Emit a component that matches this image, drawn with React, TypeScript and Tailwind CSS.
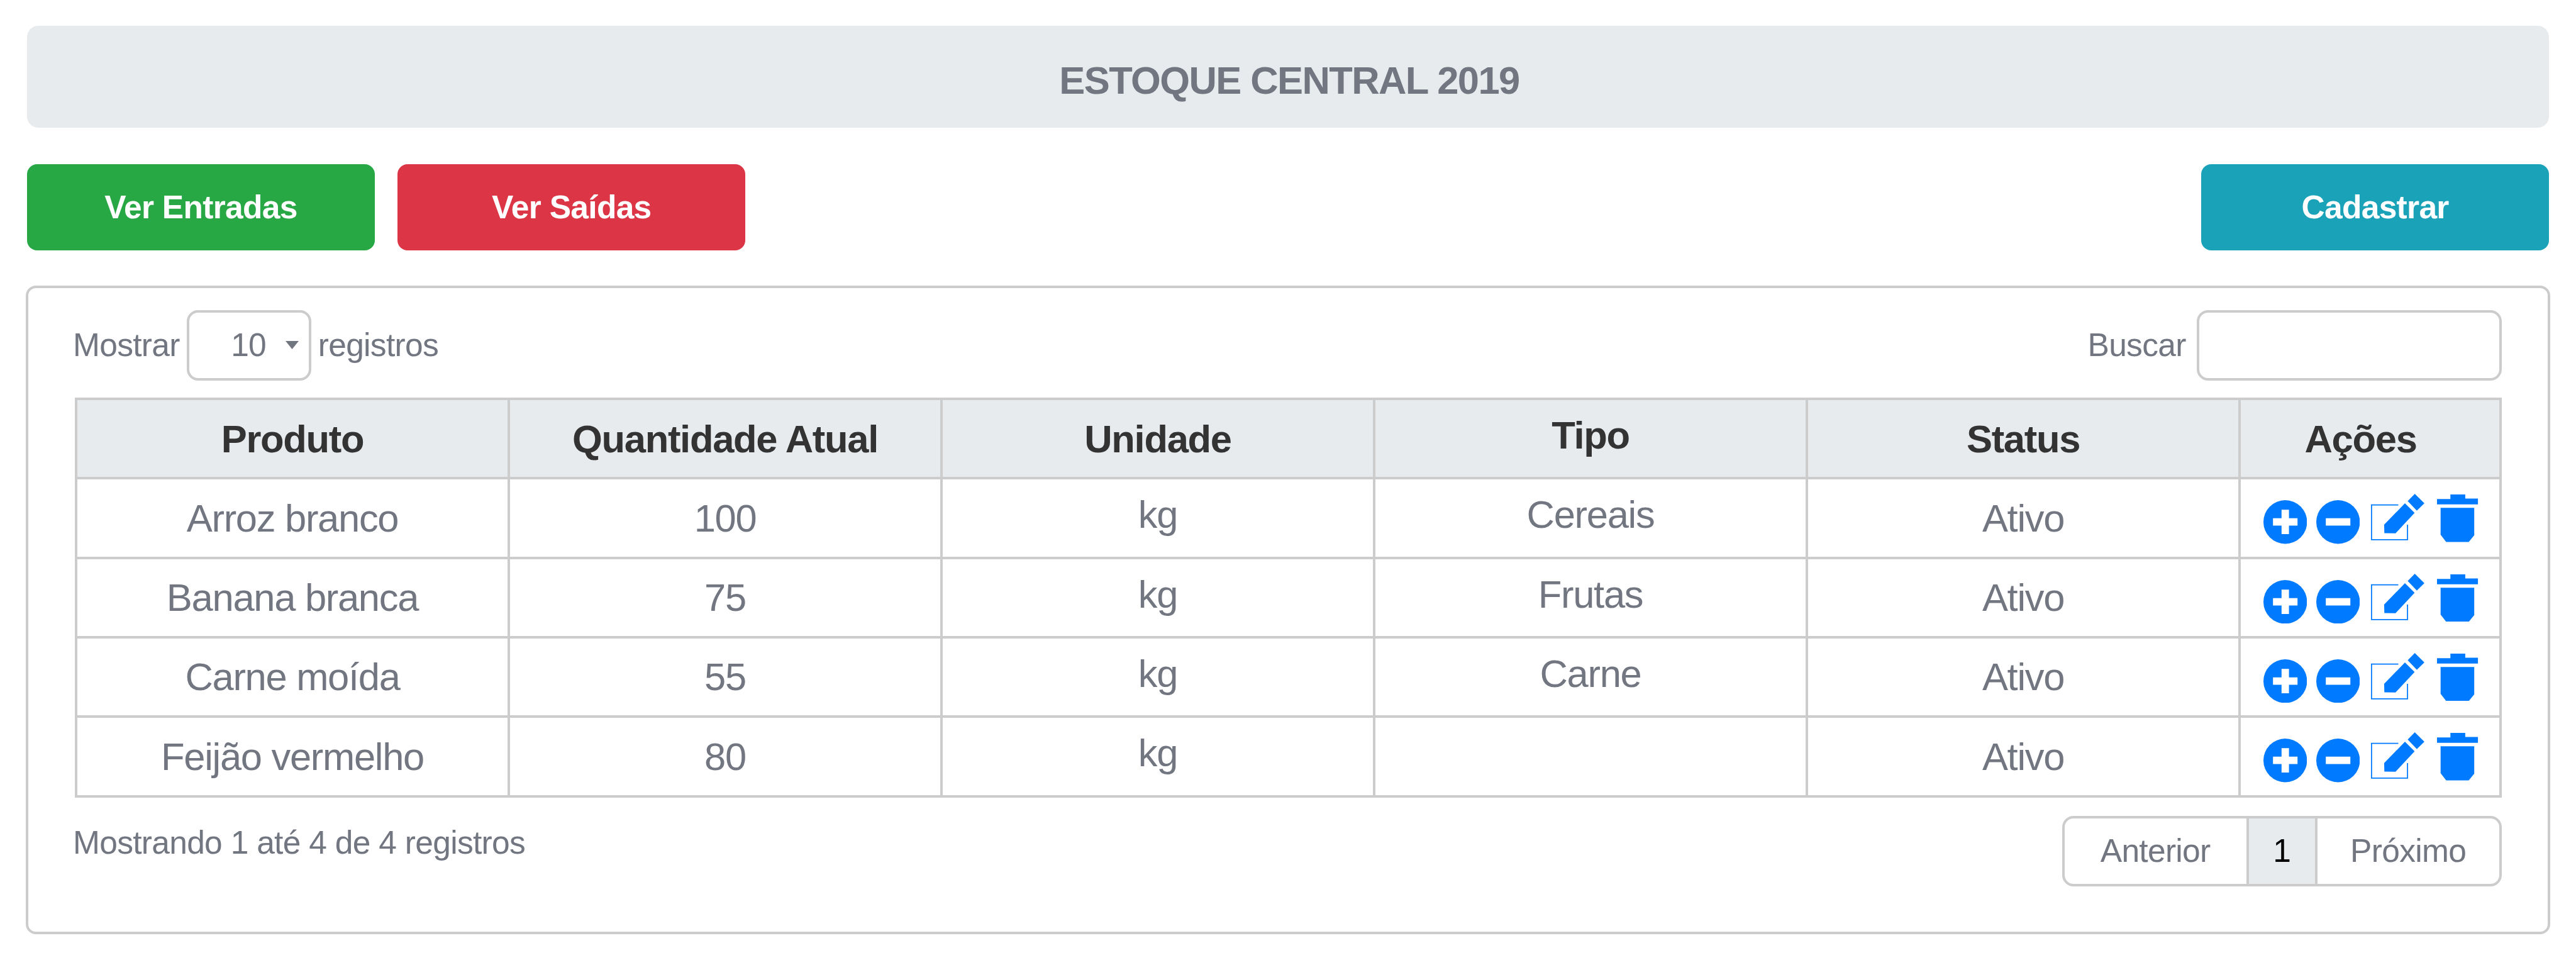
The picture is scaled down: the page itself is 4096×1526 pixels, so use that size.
import { useState } from "react";

type Product = {
  name: string;
  quantity: number;
  unit: string;
  type: string;
  status: string;
};

const products: Product[] = [
  { name: "Arroz branco", quantity: 100, unit: "kg", type: "Cereais", status: "Ativo" },
  { name: "Banana branca", quantity: 75, unit: "kg", type: "Frutas", status: "Ativo" },
  { name: "Carne moída", quantity: 55, unit: "kg", type: "Carne", status: "Ativo" },
  { name: "Feijão vermelho", quantity: 80, unit: "kg", type: "", status: "Ativo" },
];

function PlusIcon() {
  return (
    <svg viewBox="0 0 69.4 69.4" className="mt-[8.8px] w-[69.4px] h-[69.4px] shrink-0" fill="currentColor">
      <circle cx="34.7" cy="34.7" r="34.7" />
      <path fill="#fff" d="M28.8 15.3h11.8v13.5h13.6v11.8H40.6v13.5H28.8V40.6H15.2V28.8h13.6z" />
    </svg>
  );
}

function MinusIcon() {
  return (
    <svg viewBox="0 0 69.4 69.4" className="mt-[8.8px] ml-[14.6px] w-[69.4px] h-[69.4px] shrink-0" fill="currentColor">
      <circle cx="34.7" cy="34.7" r="34.7" />
      <path fill="#fff" d="M15.2 28.8h39v11.8h-39z" />
    </svg>
  );
}

function EditIcon() {
  return (
    <svg viewBox="0 0 85 73.8" className="-mt-[1px] ml-[18px] w-[85px] h-[73.8px] shrink-0" fill="currentColor">
      <path fill="none" stroke="currentColor" strokeWidth="1.75" d="M43.5 17.75H.9V72.9h57.2V49.1" />
      <path d="M54 15l15.4 15.3-30.3 32.4-17.8-.3-.4-13.3z" />
      <path d="M69.7 0l15.2 15-12 11.7-14.5-15.3z" />
    </svg>
  );
}

function TrashIcon() {
  return (
    <svg viewBox="0 0 65.1 75.4" className="ml-[20.1px] w-[65.1px] h-[75.4px] shrink-0" fill="currentColor">
      <path d="M0 7.3h21.3V0h23.6v6.5h20.2v9.2H0z" />
      <path d="M5.7 21.2h53.5v43.6l-8.7 10.6H14.6L5.7 63.9z" />
    </svg>
  );
}

function ProductRow({ product }: { product: Product }) {
  return (
    <tr className="h-[126.3px]">
      <td className="border-4 border-[#ccc]">{product.name}</td>
      <td className="border-4 border-[#ccc]">{product.quantity}</td>
      <td className="border-4 border-[#ccc] pb-[11px]">{product.unit}</td>
      <td className="border-4 border-[#ccc] pb-[11px]">{product.type}</td>
      <td className="border-4 border-[#ccc]">{product.status}</td>
      <td className="border-4 border-[#ccc] align-top">
        <div className="flex items-start pt-6 pl-9 text-[#007bff]">
          <PlusIcon />
          <MinusIcon />
          <EditIcon />
          <TrashIcon />
        </div>
      </td>
    </tr>
  );
}

export default function App() {
  const [pageSize, setPageSize] = useState("10");
  const [search, setSearch] = useState("");

  const rows = products.filter((p) => p.name.toLowerCase().includes(search.toLowerCase()));

  return (
    <div className="w-[4096px] h-[1526px] overflow-hidden bg-white pt-[41px] px-[42.7px] font-['Liberation_Sans',Arial,sans-serif] text-[51.5px] tracking-[-0.7px] leading-none text-[#717681]">
      <h1 className="flex items-center justify-center h-[162px] pt-[12px] pl-[4px] rounded-[18px] bg-[#e7ebee] text-[61.5px] tracking-[-1.6px] font-bold">
        ESTOQUE CENTRAL 2019
      </h1>

      <div className="flex mt-[58px] font-bold text-white">
        <button className="w-[553.4px] h-[137px] rounded-2xl bg-[#28a745]">Ver Entradas</button>
        <button className="w-[553.4px] h-[137px] ml-9 rounded-2xl bg-[#dc3545]">Ver Saídas</button>
        <button className="w-[553.4px] h-[137px] ml-auto rounded-2xl bg-[#1aa2b8]">Cadastrar</button>
      </div>

      <div className="-mx-[1.7px] mt-14 h-[1031px] border-4 border-[#ccc] rounded-2xl pl-[71px] pr-[73.4px] pt-[34.7px]">
        <div className="flex items-center h-[112px]">
          <label className="flex items-center">
            Mostrar
            <span className="relative ml-[11.5px] mr-[10.6px]">
              <select
                value={pageSize}
                onChange={(e) => setPageSize(e.target.value)}
                className="block appearance-none w-[198px] h-[112px] pl-[66px] border-4 border-[#ccc] rounded-[18px]"
              >
                <option>10</option>
                <option>25</option>
                <option>50</option>
              </select>
              <svg viewBox="0 0 21 13" className="absolute right-5 top-[49.5px] w-[21px] h-[13px] pointer-events-none" fill="currentColor">
                <path d="M0 0h21L10.5 13z" />
              </svg>
            </span>
            registros
          </label>
          <label className="flex items-center ml-auto">
            Buscar
            <input
              value={search}
              onChange={(e) => setSearch(e.target.value)}
              className="ml-[17px] w-[485px] h-[112px] px-6 border-4 border-[#ccc] rounded-[18px]"
            />
          </label>
        </div>

        <table className="mt-[27.5px] ml-[3px] w-[3859px] table-fixed border-collapse text-center text-[61.5px] tracking-[-1.3px] leading-none">
          <colgroup>
            <col className="w-[688px]" />
            <col className="w-[688px]" />
            <col className="w-[688px]" />
            <col className="w-[688px]" />
            <col className="w-[688px]" />
            <col />
          </colgroup>
          <thead>
            <tr className="h-[126.3px] bg-[#e7ebee] text-[#333]">
              <th className="border-4 border-[#ccc]">Produto</th>
              <th className="border-4 border-[#ccc]">Quantidade Atual</th>
              <th className="border-4 border-[#ccc]">Unidade</th>
              <th className="border-4 border-[#ccc] pb-[11px]">Tipo</th>
              <th className="border-4 border-[#ccc]">Status</th>
              <th className="border-4 border-[#ccc] pr-[30px]">Ações</th>
            </tr>
          </thead>
          <tbody>
            {rows.map((product) => (
              <ProductRow key={product.name} product={product} />
            ))}
          </tbody>
        </table>

        <div className="flex items-start justify-between mt-[29.5px]">
          <p className="mt-[17px]">Mostrando 1 até 4 de 4 registros</p>
          <div className="flex h-[112px] w-[699px] border-4 border-[#ccc] rounded-[18px]">
            <button className="flex-1">Anterior</button>
            <button className="w-[113px] border-x-4 border-[#ccc] bg-[#e7ebee] text-black">1</button>
            <button className="flex-1">Próximo</button>
          </div>
        </div>
      </div>
    </div>
  );
}
